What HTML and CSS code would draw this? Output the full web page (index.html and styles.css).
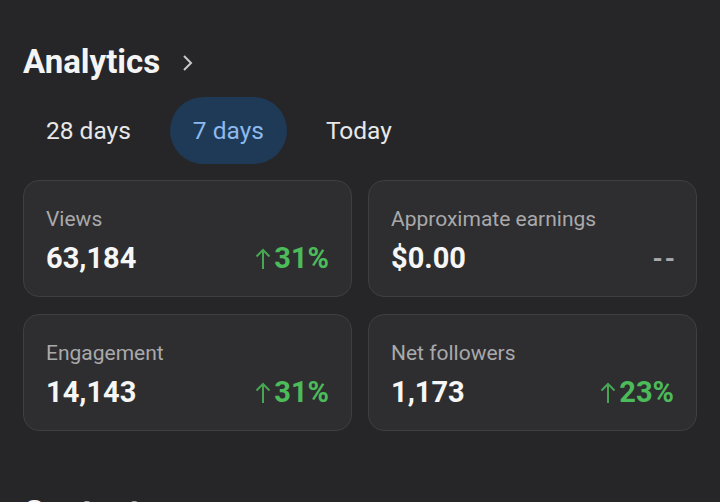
FILE: index.html
```html
<!DOCTYPE html>
<html lang="en">
<head>
<meta charset="utf-8">
<link rel="stylesheet" href="styles.css">
</head>
<body>
<main class="page">
  <section class="section">
    <h2 class="section-title">Analytics
      <svg class="chev" width="12" height="18" viewBox="0 0 12 18"><path d="M2 2 L9 9 L2 16" fill="none" stroke="#c8c8ca" stroke-width="2"/></svg>
    </h2>
    <div class="tabs">
      <span class="tab">28 days</span>
      <span class="tab active">7 days</span>
      <span class="tab">Today</span>
    </div>
    <div class="grid">
      <div class="card">
        <div class="label">Views</div>
        <div class="row"><span class="value">63,184</span><span class="delta"><svg class="arrow" width="16" height="22" viewBox="0 0 16 22"><path d="M8 21 V2 M1.5 8.5 L8 2 L14.5 8.5" fill="none" stroke="#47a553" stroke-width="2"/></svg>31%</span></div>
      </div>
      <div class="card">
        <div class="label">Approximate earnings</div>
        <div class="row"><span class="value">$0.00</span><span class="dash">--</span></div>
      </div>
      <div class="card">
        <div class="label">Engagement</div>
        <div class="row"><span class="value">14,143</span><span class="delta"><svg class="arrow" width="16" height="22" viewBox="0 0 16 22"><path d="M8 21 V2 M1.5 8.5 L8 2 L14.5 8.5" fill="none" stroke="#47a553" stroke-width="2"/></svg>31%</span></div>
      </div>
      <div class="card">
        <div class="label">Net followers</div>
        <div class="row"><span class="value">1,173</span><span class="delta"><svg class="arrow" width="16" height="22" viewBox="0 0 16 22"><path d="M8 21 V2 M1.5 8.5 L8 2 L14.5 8.5" fill="none" stroke="#47a553" stroke-width="2"/></svg>23%</span></div>
      </div>
    </div>
  </section>
  <section class="section">
    <h2 class="section-title">Content</h2>
  </section>
</main>
</body>
</html>
```
FILE: styles.css
```css
html, body {
  margin: 0;
  padding: 0;
  background: #262628;
  height: 100%;
  overflow: hidden;
}
body {
  font-family: Roboto, "Noto Sans", sans-serif;
  color: #f2f2f2;
}
.page {
  padding: 42px 23px 0 23px;
}
.section-title {
  margin: 0;
  font-size: 33px;
  line-height: 40px;
  font-weight: 700;
  display: flex;
  align-items: center;
  gap: 22px;
  color: #f4f4f4;
}
.chev {
  margin-top: 2px;
}
.tabs {
  display: flex;
  align-items: center;
  margin-top: 15px;
  gap: 16px;
}
.tab {
  font-size: 24.5px;
  line-height: 67px;
  height: 67px;
  padding: 0 23px;
  border-radius: 34px;
  color: #e8e8e8;
}
.tab.active {
  background: #1f3a56;
  color: #8cb9ee;
}
.grid {
  margin-top: 16px;
  display: grid;
  grid-template-columns: 1fr 1fr;
  column-gap: 16px;
  row-gap: 17px;
}
.card {
  background: #2e2e30;
  border: 1.5px solid #3f3f41;
  border-radius: 16px;
  height: 117px;
  box-sizing: border-box;
  padding: 24px 22px 0 22px;
}
.label {
  font-size: 21px;
  line-height: 28px;
  color: #a9a9ab;
}
.row {
  display: flex;
  justify-content: space-between;
  align-items: baseline;
  margin-top: 8px;
}
.value {
  font-size: 29px;
  line-height: 34px;
  font-weight: 700;
  color: #f6f6f6;
}
.delta {
  font-size: 29px;
  line-height: 34px;
  font-weight: 700;
  color: #4cbb5a;
  display: flex;
  align-items: baseline;
}
.arrow {
  margin-right: 3px;
  align-self: center;
  margin-top: 1px;
}
.dash {
  font-size: 26px;
  font-weight: 700;
  color: #a9a9ab;
  letter-spacing: 2px;
  margin-right: -3px;
}
.section + .section {
  margin-top: 62px;
}
```
